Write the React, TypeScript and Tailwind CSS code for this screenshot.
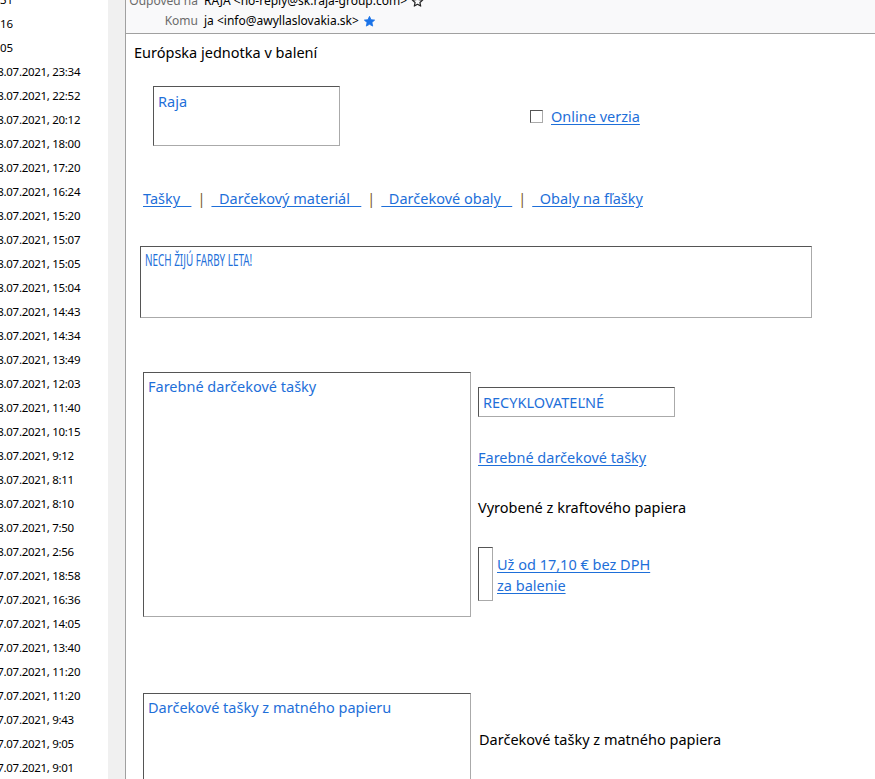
import React from "react";

const dates = [
  "28.07.2021, 23:34",
  "28.07.2021, 22:52",
  "28.07.2021, 20:12",
  "28.07.2021, 18:00",
  "28.07.2021, 17:20",
  "28.07.2021, 16:24",
  "28.07.2021, 15:20",
  "28.07.2021, 15:07",
  "28.07.2021, 15:05",
  "28.07.2021, 15:04",
  "28.07.2021, 14:43",
  "28.07.2021, 14:34",
  "28.07.2021, 13:49",
  "28.07.2021, 12:03",
  "28.07.2021, 11:40",
  "28.07.2021, 10:15",
  "28.07.2021, 9:12",
  "28.07.2021, 8:11",
  "28.07.2021, 8:10",
  "28.07.2021, 7:50",
  "28.07.2021, 2:56",
  "27.07.2021, 18:58",
  "27.07.2021, 16:36",
  "27.07.2021, 14:05",
  "27.07.2021, 13:40",
  "27.07.2021, 11:20",
  "27.07.2021, 11:20",
  "27.07.2021, 9:43",
  "27.07.2021, 9:05",
  "27.07.2021, 9:01",
];

// broken-image placeholder frame (inset border like the mail client draws)
const frame =
  "border border-t-[#555] border-l-[#555] border-b-[#aaa] border-r-[#aaa]";

const link = "text-[#1e6fd9] underline underline-offset-2";

const App = () => {
  return (
    <div
      className="flex h-[779px] w-[875px] overflow-hidden bg-white text-black"
      style={{ fontFamily: '"Noto Sans", "Open Sans", sans-serif' }}
    >
      {/* message list, cut on the left */}
      <div className="w-[108px] shrink-0 overflow-hidden text-[11.5px] leading-[24px] -mt-[12px]">
        <div className="whitespace-nowrap">31</div>
        <div className="whitespace-nowrap">16</div>
        <div className="whitespace-nowrap">05</div>
        {dates.map((d, i) => (
          <div key={i} className="whitespace-nowrap -ml-[9px] tracking-[-0.3px]">
            {d}
          </div>
        ))}
      </div>
      <div className="w-[17px] shrink-0 bg-[#f0f0f0]" />
      <div className="w-px shrink-0 bg-[#a0a0a0]" />

      <div className="flex min-w-0 flex-1 flex-col">
        {/* header */}
        <div className="h-[34px] shrink-0 overflow-hidden border-b border-[#a0a0a0] bg-[#f9f9fa] text-[12px]">
          <div className="-mt-[9px] flex h-[20px] items-center">
            <span className="w-[72px] text-right text-[#6b6b6b]">Odpověď na</span>
            <span className="ml-[6px]">RAJA &lt;no-reply@sk.raja-group.com&gt;</span>
            <svg className="ml-[4px]" width="13" height="13" viewBox="0 0 24 24" fill="none" stroke="#222" strokeWidth="2.2">
              <path d="M12 2.5l2.9 6.2 6.6.7-5 4.5 1.4 6.6L12 17.2l-5.9 3.3 1.4-6.6-5-4.5 6.6-.7z" strokeLinejoin="round" />
            </svg>
          </div>
          <div className="flex h-[20px] items-center">
            <span className="w-[72px] text-right text-[#6b6b6b]">Komu</span>
            <span className="ml-[6px]">ja &lt;info@awyllaslovakia.sk&gt;</span>
            <svg className="ml-[4px]" width="13" height="13" viewBox="0 0 24 24" fill="#1a73e8" stroke="#1a73e8" strokeWidth="1.5">
              <path d="M12 2.5l2.9 6.2 6.6.7-5 4.5 1.4 6.6L12 17.2l-5.9 3.3 1.4-6.6-5-4.5 6.6-.7z" strokeLinejoin="round" />
            </svg>
          </div>
        </div>

        {/* body */}
        <div className="flex-1 overflow-hidden pl-[8px] text-[14.5px]">
          <div className="mt-[8px] leading-[20px]">Európska jednotka v balení</div>

          <div className="mt-[24px] flex items-start">
            <div className={`${frame} ml-[19px] h-[60px] w-[187px] px-[4px] pt-[4px] leading-[20px] text-[#1e6fd9]`}>
              Raja
            </div>
            <div className="ml-[190px] mt-[20px] flex items-center">
              <span className={`${frame} h-[13px] w-[13px]`} />
              <a className={`${link} ml-[8px] leading-[20px]`}>Online verzia</a>
            </div>
          </div>

          <div className="ml-[9px] mt-[42px] flex items-center whitespace-pre leading-[20px]">
            <a className={link}>Tašky   </a>
            <span className="mx-[6px] text-[#7a5c2e]">|</span>
            <a className={link}>  Darčekový materiál   </a>
            <span className="mx-[6px] text-[#7a5c2e]">|</span>
            <a className={link}>  Darčekové obaly   </a>
            <span className="mx-[6px] text-[#7a5c2e]">|</span>
            <a className={link}>  Obaly na fľašky</a>
          </div>

          <div className={`${frame} ml-[6px] mt-[38px] h-[72px] w-[672px] px-[4px] pt-[3px]`}>
            <span className="inline-block origin-left scale-x-[0.6] text-[16.5px] leading-[20px] text-[#1e6fd9] whitespace-nowrap">
              NECH ŽIJÚ FARBY LETA!
            </span>
          </div>

          {/* product 1 */}
          <div className="mt-[54px] flex items-start">
            <div className={`${frame} ml-[9px] h-[245px] w-[328px] px-[4px] pt-[3px] leading-[20px] text-[#1e6fd9]`}>
              Farebné darčekové tašky
            </div>
            <div className="ml-[7px] mt-[15px] flex flex-col items-start leading-[20px]">
              <div className={`${frame} h-[30px] w-[197px] px-[4px] pt-[4px] text-[#1e6fd9]`}>
                RECYKLOVATEĽNÉ
              </div>
              <a className={`${link} mt-[30px]`}>Farebné darčekové tašky</a>
              <div className="mt-[30px]">Vyrobené z kraftového papiera</div>
              <div className="mt-[30px] flex items-start">
                <span className={`${frame} h-[54px] w-[15px]`} />
                <a className={`${link} ml-[4px] mt-[7px] leading-[21px]`}>
                  Už od 17,10 € bez DPH
                  <br />
                  za balenie
                </a>
              </div>
            </div>
          </div>

          {/* product 2 */}
          <div className="mt-[76px] flex items-start">
            <div className={`${frame} ml-[9px] h-[120px] w-[328px] px-[4px] pt-[3px] leading-[20px] text-[#1e6fd9]`}>
              Darčekové tašky z matného papieru
            </div>
            <div className="ml-[8px] mt-[36px] leading-[20px]">Darčekové tašky z matného papiera</div>
          </div>
        </div>
      </div>
    </div>
  );
};

export default App;
